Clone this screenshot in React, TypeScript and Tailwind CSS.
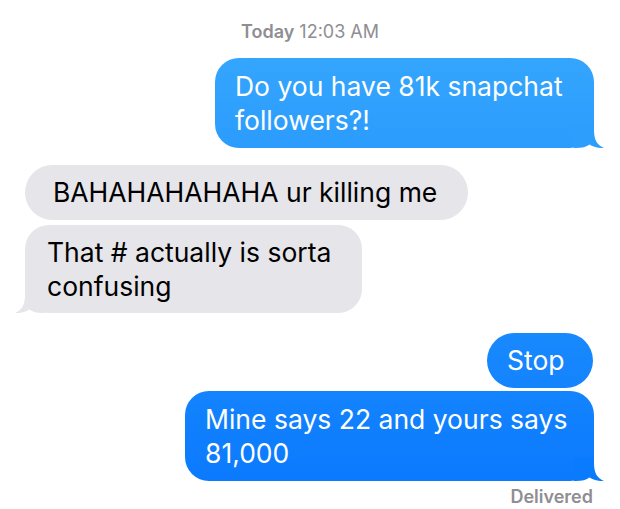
import React from "react";

const font = { fontFamily: "Inter, 'Liberation Sans', sans-serif" };

function SentTail({ fill }: { fill: string }) {
  return (
    <svg
      className="absolute bottom-0 right-[-10px]"
      width="30"
      height="24"
      viewBox="0 0 30 24"
    >
      <path
        d="M0 0 H20 V6 C20 16 23 21 30 24 C24.5 24.4 19 23 15.5 20.5 C12.5 23 8 24 2 24 H0 Z"
        fill={fill}
      />
    </svg>
  );
}

function RecvTail() {
  return (
    <svg
      className="absolute bottom-0 left-[-10px] -scale-x-100"
      width="30"
      height="24"
      viewBox="0 0 30 24"
    >
      <path
        d="M0 0 H20 V6 C20 16 23 21 30 24 C24.5 24.4 19 23 15.5 20.5 C12.5 23 8 24 2 24 H0 Z"
        fill="#e5e5ea"
      />
    </svg>
  );
}

const blue =
  "bg-[linear-gradient(180deg,#3aabfd_0%,#0877fe_100%)] bg-fixed text-white";

export default function App() {
  return (
    <div
      className="w-[620px] h-[509px] bg-white overflow-hidden flex flex-col text-[26.5px] leading-[34px]"
      style={font}
    >
      <div className="mt-[21px] text-center text-[18px] leading-[22px] text-[#8e8e93]">
        <span className="font-semibold">Today</span> 12:03 AM
      </div>

      <div className="mt-[15px] self-end mr-[26px] relative">
        <div className={`${blue} w-[379px] rounded-[24px] pl-5 py-[11px] whitespace-nowrap`}>
          Do you have 81k snapchat
          <br />
          followers?!
        </div>
        <SentTail fill="#2e9efc" />
      </div>

      <div className="mt-[17px] ml-[25px] self-start">
        <div className="w-[443px] h-[55px] rounded-[28px] bg-[#e5e5ea] text-black pl-[28px] py-[10px] whitespace-nowrap">
          BAHAHAHAHAHA ur killing me
        </div>
      </div>

      <div className="mt-[5px] ml-[25px] self-start relative">
        <div className="w-[337px] rounded-[24px] bg-[#e5e5ea] text-black pl-[22px] py-[10px] whitespace-nowrap">
          That # actually is sorta
          <br />
          confusing
        </div>
        <RecvTail />
      </div>

      <div className="mt-[20px] self-end mr-[27px]">
        <div className={`${blue} w-[106px] h-[55px] rounded-[28px] pl-5 py-[10px]`}>
          Stop
        </div>
      </div>

      <div className="mt-[3px] self-end mr-[26px] relative">
        <div className={`${blue} w-[409px] rounded-[24px] pl-5 py-[11px] whitespace-nowrap`}>
          Mine says 22 and yours says
          <br />
          81,000
        </div>
        <SentTail fill="#0b7bfe" />
      </div>

      <div className="mt-[5px] self-end mr-[27px] text-[18px] leading-[22px] font-semibold text-[#8e8e93]">
        Delivered
      </div>
    </div>
  );
}
